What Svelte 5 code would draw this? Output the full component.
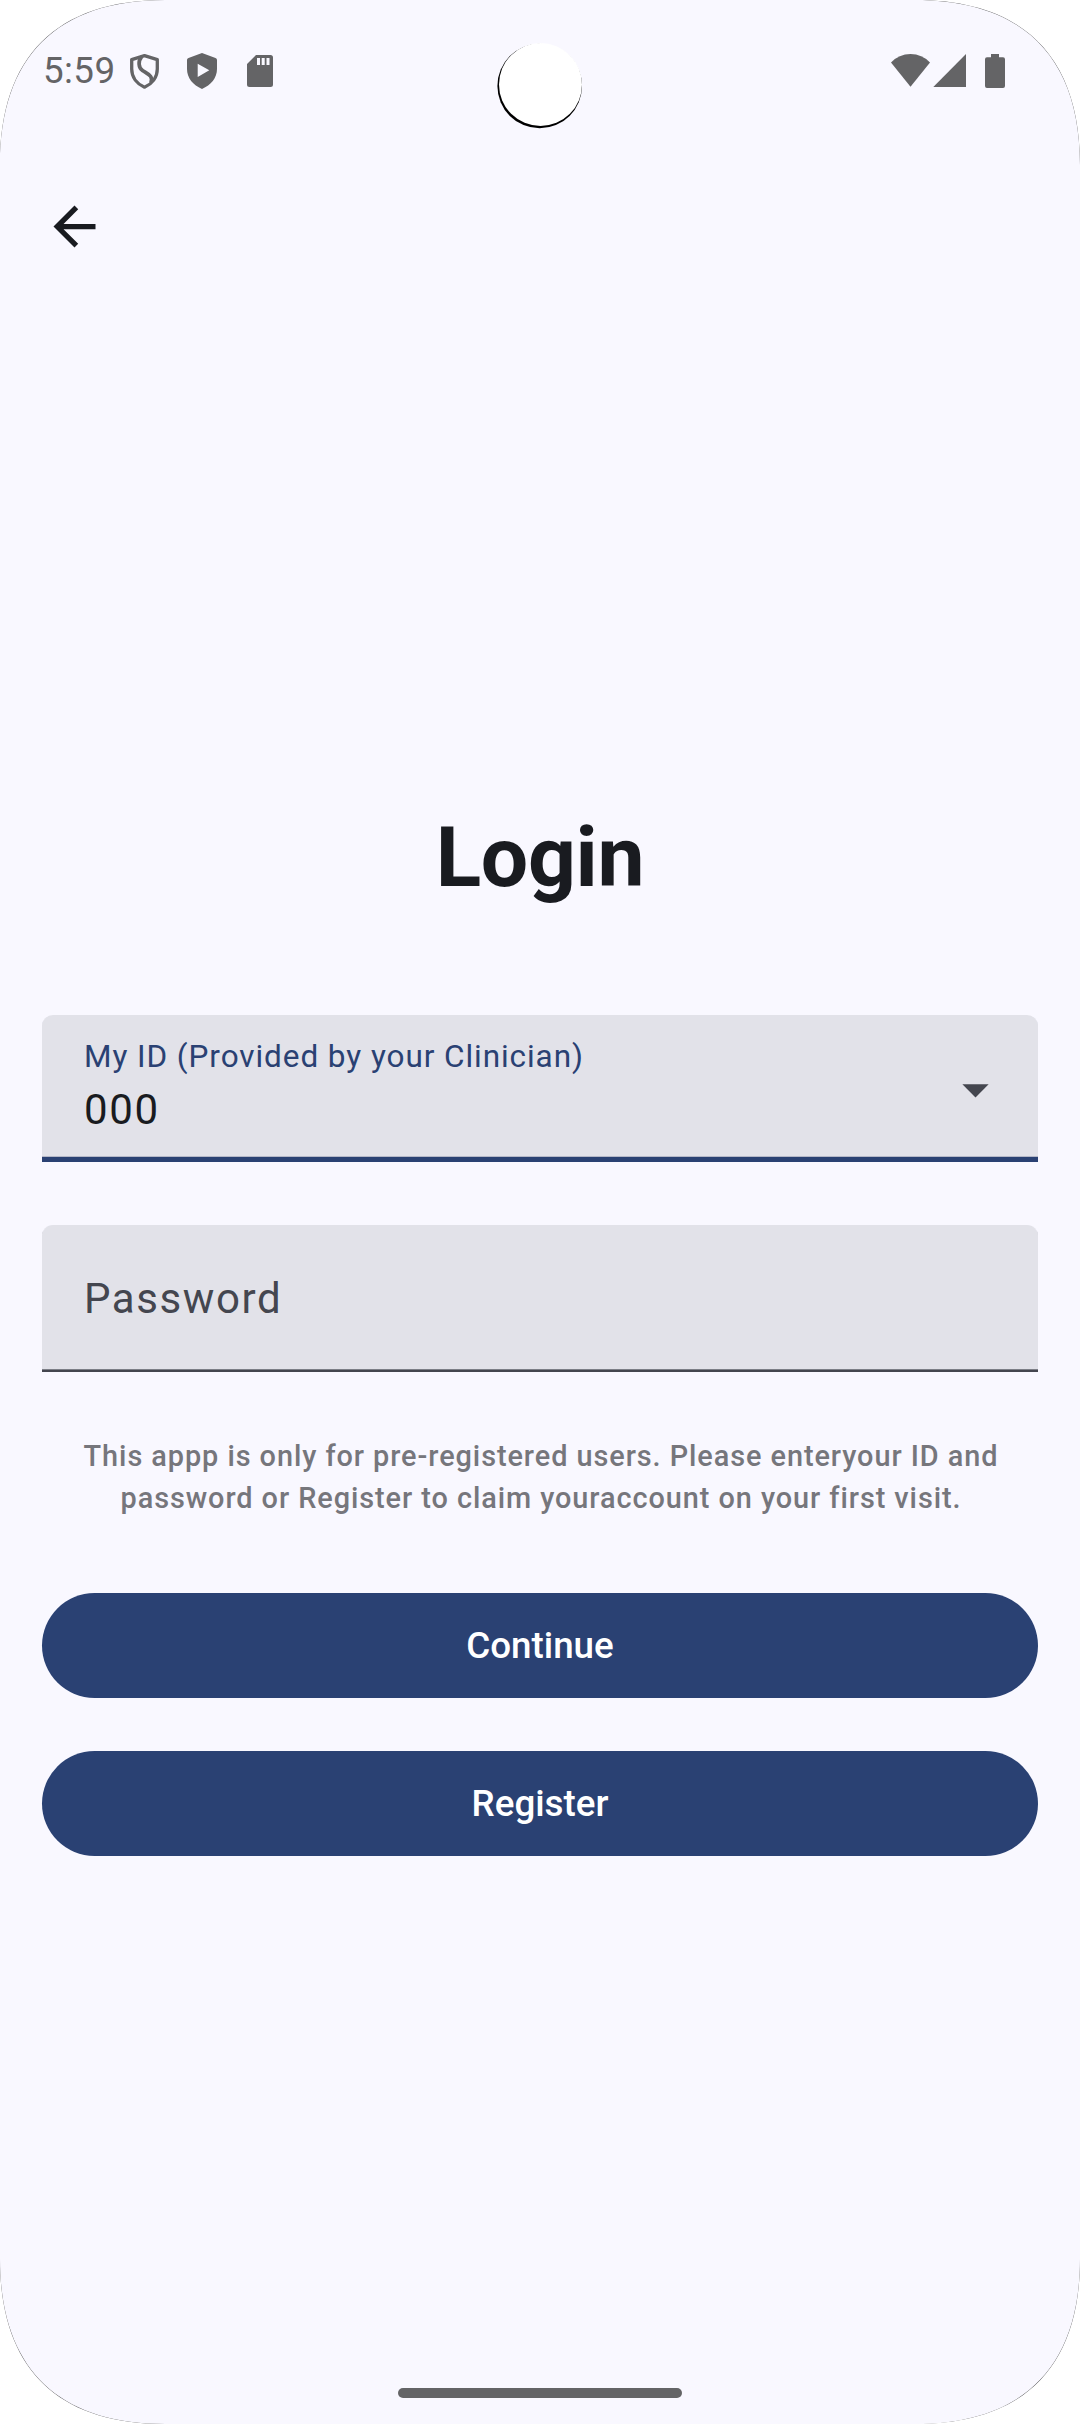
<script>
  let participantId = $state('000');
  const corners = ['tl', 'tr', 'bl', 'br'];
</script>

<div class="screen">
  <header class="status">
    <span class="time">5:59</span>
    <svg class="notifications" width="144" height="38" viewBox="129 52 144 38">
      <g fill="none" stroke="#646466" stroke-width="3.3" stroke-linejoin="round">
        <path d="M144.500 55.600 157.300 59.600V69C157.300 77.500 152 84 144.500 87.200 137 84 131.700 77.500 131.700 69V59.600Z" />
        <path stroke-width="3.700" d="M141.500 57C138 61 138.300 67.500 142.500 70.500 147.500 74 153.500 75.500 151 82.500" />
      </g>
      <g fill="#646466">
        <path fill-rule="evenodd" d="M202 53 215.500 58Q217 58.700 217 60V69C217 78 211 85 202 89 193 85 187 78 187 69V60Q187 58.700 188.500 58ZM197.700 63.700V77L209.300 70.300Z" />
        <path fill-rule="evenodd" d="M256 55H270.500Q273 55 273 57.500V84.500Q273 87 270.500 87H249.500Q247 87 247 84.500V64ZM257 58V65H260V58ZM261.700 58V65H264.700V58ZM266.500 58V65H269.500V58Z" />
      </g>
    </svg>
    <svg class="system" width="116" height="36" viewBox="890 53 116 36" fill="#646466">
      <path d="M891 62.500Q899 54 910.500 54T930 62.500L910.500 86.800Z" />
      <path d="M966 54V87H933.300Z" />
      <path d="M991 54H999V57.300H1003Q1005 57.300 1005 59.300V86Q1005 88 1003 88H987Q985 88 985 86V59.300Q985 57.300 987 57.300H991Z" />
    </svg>
    <svg class="camera" width="90" height="90" viewBox="495 41 90 90">
      <circle cx="539.700" cy="86" r="42.300" fill="#000" />
      <circle cx="540.500" cy="84.500" r="41.500" fill="#fff" />
    </svg>
  </header>

  <nav>
    <button class="back" aria-label="Back">
      <svg width="63" height="63" viewBox="0 0 24 24" fill="#191b20">
        <path d="M20 11H7.830L13.420 5.410 12 4 4 12 12 20 13.410 18.590 7.830 13H20Z" />
      </svg>
    </button>
  </nav>

  <main>
    <h1>Login</h1>
    <div class="field active">
      <div class="entry">
        <span class="label">My ID (Provided by your Clinician)</span>
        <span class="value">{participantId}</span>
      </div>
      <svg class="arrow" width="63" height="63" viewBox="0 0 24 24" fill="#44464f"><path d="M7 10 12 15 17 10Z" /></svg>
    </div>
    <div class="field password"><span class="placeholder">Password</span></div>
    <p>This appp is only for pre-registered users. Please enteryour ID and<br />password or Register to claim youraccount on your first visit.</p>
    <button class="action">Continue</button>
    <button class="action">Register</button>
  </main>

  <div class="home"></div>

  {#each corners as corner}
    <svg class="corner {corner}" width="168" height="168" viewBox="0 0 168 168">
      <path class="edge" d="M0 0V165C0 57 57 0 165 0Z" />
      <path d="M0 0V164.500C0 56.500 56.500 0 164.500 0Z" fill="#fff" />
    </svg>
  {/each}
</div>

<style>
  :global(body) { margin: 0; background: #f9f8ff; }
  .screen {
    position: relative;
    box-sizing: border-box;
    width: 1080px;
    height: 2424px;
    overflow: hidden;
    display: flex;
    flex-direction: column;
    background: #f9f8ff;
    color: #191b20;
    font-family: Roboto, sans-serif;
  }
  svg { display: block; flex: none; }
  .status {
    position: relative;
    box-sizing: border-box;
    height: 142px;
    padding: 0 74px 0 43px;
    display: flex;
    align-items: center;
  }
  .time {
    width: 86px;
    color: #646466;
    font-size: 36.750px;
    line-height: 44px;
    letter-spacing: 0.400px;
    white-space: nowrap;
  }
  .system { margin-left: auto; }
  .camera { position: absolute; left: 495px; top: 41px; }
  nav {
    box-sizing: border-box;
    height: 168px;
    padding: 0 43px;
    display: flex;
    align-items: center;
  }
  button { border: 0; padding: 0; font-family: inherit; }
  .back { background: none; }
  main {
    display: flex;
    flex-direction: column;
    padding: 493px 42px 0;
  }
  h1 {
    margin: 0 0 102px;
    font-size: 84px;
    line-height: 110px;
    font-weight: 700;
    letter-spacing: -0.300px;
    text-align: center;
  }
  .field {
    box-sizing: border-box;
    height: 147px;
    padding: 4px 31px 0 42px;
    display: flex;
    align-items: center;
    justify-content: space-between;
    border-radius: 11px 11px 0 0;
    background: #e2e2e9;
  }
  .active { border-bottom: 5px solid #2a4173; box-shadow: inset 0 -1px #b5b8c8; }
  .entry { display: flex; flex-direction: column; }
  .arrow { margin-top: 2px; }
  .label {
    color: #2a4173;
    font-size: 31.500px;
    line-height: 42px;
    letter-spacing: 0.930px;
  }
  .value { font-size: 42px; line-height: 63px; letter-spacing: 1.700px; }
  .password {
    margin-top: 63px;
    padding-top: 1px;
    border-bottom: 2px solid #44464f;
    box-shadow: inset 0 -1px #7c7e86;
  }
  .placeholder { color: #44464f; font-size: 42px; letter-spacing: 1.580px; }
  p {
    margin: 63px 0 74px;
    padding-left: 2px;
    color: #76767c;
    font-size: 28.875px;
    line-height: 42px;
    font-weight: 500;
    letter-spacing: 0.940px;
    text-align: center;
    white-space: nowrap;
  }
  .action {
    height: 105px;
    border-radius: 53px;
    background: #2a4173;
    color: #fff;
    font-size: 36.750px;
    line-height: 53px;
    font-weight: 500;
  }
  .action + .action { margin-top: 53px; }
  .home {
    width: 284px;
    height: 10px;
    margin: auto auto 26px;
    border-radius: 5px;
    background: #646466;
  }
  .corner { position: absolute; }
  .edge { fill: #000; fill-opacity: 0.7; }
  .tl { top: 0; left: 0; }
  .tr { top: 0; right: 0; transform: scaleX(-1); }
  .bl { bottom: 0; left: 0; transform: scaleY(-1); }
  .br { bottom: 0; right: 0; transform: scale(-1); }
</style>
